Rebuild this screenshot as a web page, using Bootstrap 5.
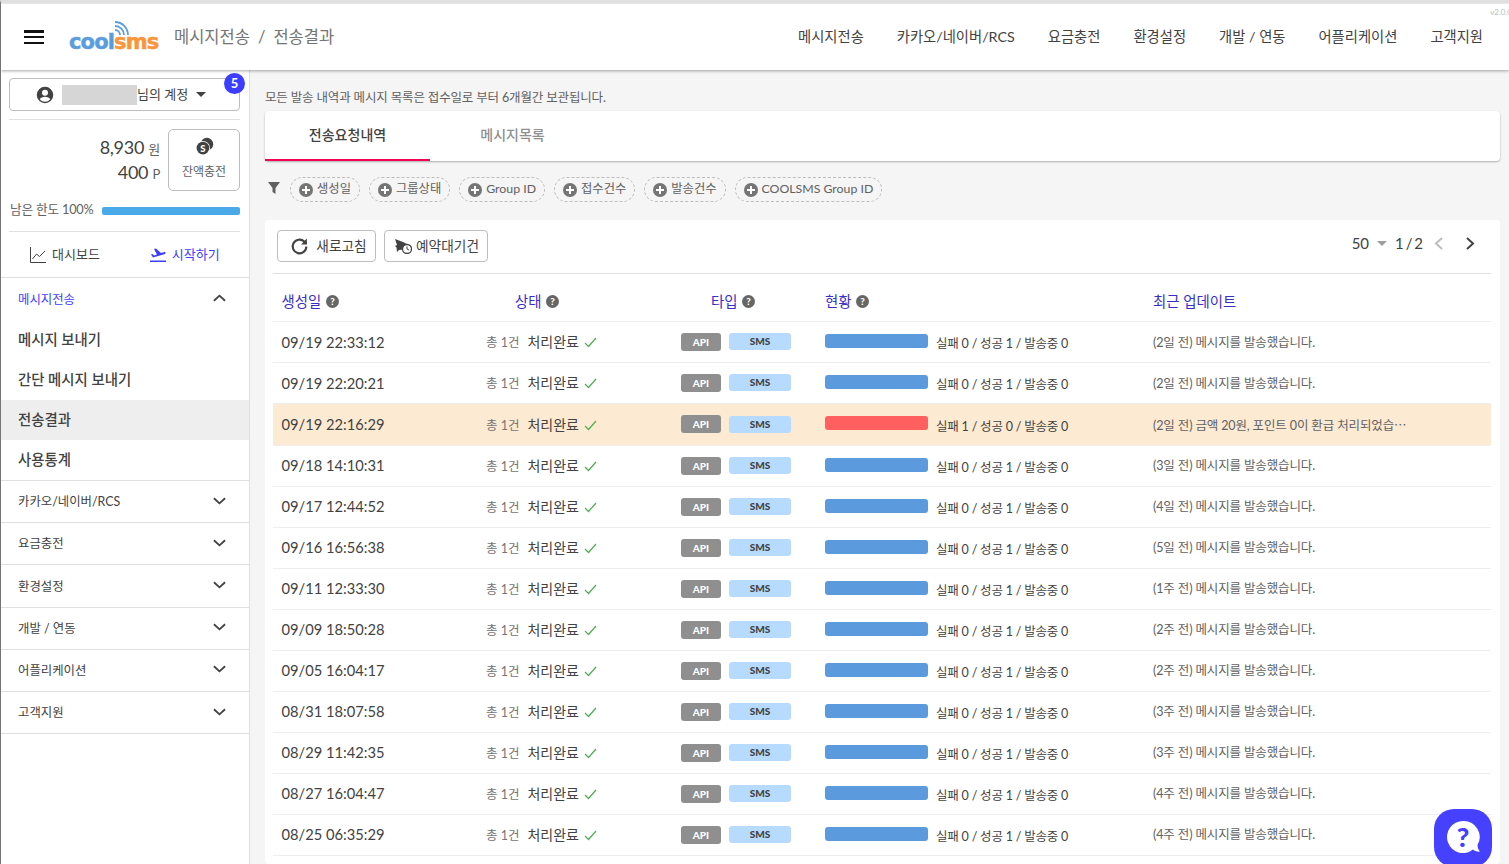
<!doctype html>
<html lang="ko">
<head>
<meta charset="utf-8">
<title>coolsms</title>
<link rel="stylesheet" href="https://cdn.jsdelivr.net/npm/bootstrap@5.3.0/dist/css/bootstrap.min.css">
<style>
html,body{height:864px;overflow:hidden}
body{font-family:Lato,"Noto Sans CJK KR",sans-serif;background:#f5f5f5;color:#424242;font-size:14px;border-left:1px solid #757575;border-top:3px solid #e0e0e0;padding-top:1px}
.app-head{height:66px;background:#fff;box-shadow:0 1px 3px rgba(0,0,0,.35);position:relative;z-index:2;padding:0 26px 0 23px}
.burger{width:20px;height:14px;display:flex;flex-direction:column;justify-content:space-between;margin-right:25px}
.burger i{display:block;height:2.5px;background:#111}
.logo-box{position:relative;width:92px;height:36px;margin-right:13px}
.logo-txt{position:absolute;left:0;bottom:2px;font:900 21px/22px "DejaVu Sans",sans-serif;letter-spacing:-.85px;color:#5b9ddc;white-space:nowrap;-webkit-text-stroke:.5px currentColor}
.logo-txt b{color:#f9953a;font-weight:900}
.logo-wave{position:absolute;left:43px;top:0}
.crumb{font-size:16.5px;color:#757575}
.crumb span{margin:0 8px}
.top-link{font-size:14.3px;color:#424242;text-decoration:none;margin-left:33px}
.ver{position:absolute;right:-3px;top:2px;font-size:8px;color:#bdbdbd}
.shell{height:794px}
.side-col{width:249px;flex:none;background:#fff;border-right:1px solid #e0e0e0;height:794px}
.side-in{padding:8px 9px 0 8px}
.acct{height:33px;border:1px solid #bdbdbd;border-radius:4px;position:relative;font-size:13px;color:#424242;background:#fff;padding-left:26px}
.mask{width:75px;height:20px;background:#d6d6d6;margin-left:8px}
.caret-d{width:0;height:0;border-left:5px solid transparent;border-right:5px solid transparent;border-top:5px solid #424242;margin-left:8px}
.num-badge{position:absolute;right:-6px;top:-6px;width:21px;height:21px;border-radius:50%;background:#3d3dff;color:#fff;font-size:13px;font-weight:700;line-height:21px;text-align:center}
.side-rule{height:1px;background:#e0e0e0;margin:0}
.bal-row{padding-top:9px}
.money{font-size:18px;line-height:25px;color:#424242;letter-spacing:-.3px;text-align:right;padding-right:8px;flex:1}
.money small{font-size:13px;color:#616161;line-height:1}
.charge{width:72px;height:62px;border:1px solid #bdbdbd;border-radius:5px;background:#fff;font-size:12px;line-height:16px;color:#616161;padding:0 0 4px}
.limit-row{height:20px;margin-top:10px;padding-left:1px}
.limit-lbl{font-size:12.7px;color:#616161;letter-spacing:-.2px;width:92px;white-space:nowrap;margin-top:-2px}
.limit-bar{flex:1;height:8px;border-radius:2px;background:#4aa9e9}
.rule-gap{margin-top:10px}
.quick{height:45px}
.quick a{font-size:13px;text-decoration:none;color:#424242;gap:6px}
.quick a.go{color:#3d3dff}
.q-one{margin-left:21px}
.q-two{margin-left:50px}
.menu-sec{border-top:1px solid #e0e0e0}
.menu-row{height:42.2px;padding:0 23px 0 17px;font-size:12.4px;color:#424242;border-bottom:1px solid #e0e0e0}
.menu-row span{padding-top:2px}
.menu-row svg{margin-bottom:2px}
.menu-row.open{border-bottom:0;color:#3d3dff;height:42px}
.menu-item{height:40px;padding-left:17px;font-size:14.4px;font-weight:500;color:#424242;text-decoration:none;display:flex;align-items:center}
.menu-item.on{background:#eee}
.menu-last{border-bottom:1px solid #e0e0e0;height:41px}
.main-col{flex:1;padding:19px 9px 0 15px;min-width:0}
.note{font-size:12.5px;line-height:18px;color:#616161;letter-spacing:-.15px;margin-bottom:4px}
.tabs-card{height:50px;background:#fff;border-radius:4px;box-shadow:0 1px 2px rgba(0,0,0,.3)}
.tab-one{width:165px;height:50px;font-size:14px;display:flex;align-items:center;justify-content:center;color:#8f8f8f;font-weight:500;padding-bottom:3px}
.tab-one.on{color:#424242;border-bottom:2px solid #f50057;padding-bottom:1px}
.filters{height:59px;padding-left:3px;padding-bottom:2px;gap:9px}
.funnel{margin-right:1px;margin-bottom:3px}
.chip{height:25px;border:1px dashed #bdbdbd;border-radius:13px;padding:0 8px;font-size:12.3px;color:#616161;display:flex;align-items:center;gap:4px;white-space:nowrap}
.list-card{background:#fff;border-radius:4px;padding:10px 9px 0 8px;height:644px;overflow:hidden}
.tools{height:44px;padding:0 4px;border-bottom:1px solid #e0e0e0}
.tool-btn{height:32px;border:1px solid #bdbdbd;border-radius:4px;background:#fff;color:#424242;font-size:13.7px;padding:0;display:flex;align-items:center;justify-content:center;gap:7px}
.btn-refresh{width:99px;padding-left:4px}
.btn-wait{width:104px;padding-left:2px;gap:4px}
.pager{font-size:15px;color:#424242;padding-right:12px;height:26px}
.caret-g{width:0;height:0;border-left:5px solid transparent;border-right:5px solid transparent;border-top:5px solid #9e9e9e}
.sent{table-layout:fixed;width:100%;margin:0;border-collapse:collapse;--bs-table-bg:transparent;color:#424242}
.sent th{height:47px;font-weight:400;font-size:14.4px;color:#3a2fc4;padding:10px 0 0 8px;vertical-align:middle;border-bottom:1px solid #eee}
.sent th:first-child,.sent td:first-child{padding-left:8.5px}
.sent td{height:41px;padding:1px 0 0 8px;vertical-align:middle;border-bottom:1px solid #eee;white-space:nowrap;color:#424242}
.sent tr.warn td{background:#fdead3;height:42px}
.sent tr.warn ~ tr td.c-date,.sent tr.warn ~ tr td.c-state{padding-top:0}
.c-date{font-size:14.7px}
.c-total{font-size:12.5px;color:#757575;margin-right:8px}
.c-done{font-size:14px;color:#424242}
.c-check{margin-left:5px;vertical-align:-1px}
.lbl-api{display:inline-block;width:40px;height:18px;line-height:18px;background:#8f8f8f;color:#fff;border-radius:3px;text-align:center;font-size:10px;font-weight:900;vertical-align:middle;margin-top:-4px}
.lbl-sms{display:inline-block;width:62px;height:17px;line-height:17px;background:#b6dbff;color:#424242;border-radius:3px;text-align:center;font-size:10px;font-weight:900;margin-left:8px;vertical-align:middle;margin-top:-4px}
.p-bar{display:inline-block;width:103px;height:14px;border-radius:3px;background:#5c9ade;vertical-align:middle;margin-top:-4px}
.p-bar.bad{background:#ff5f5f}
.p-txt{font-size:12.5px;color:#424242;margin-left:8px;letter-spacing:-.2px;vertical-align:-2px}
.sent td.upd{font-size:12.5px;color:#616161;letter-spacing:-.13px;padding-top:3px}
.sent tr.warn ~ tr td.upd{padding-top:1px}
.upd-dots{font-family:"Noto Sans CJK KR",sans-serif}
.fab-clip{position:fixed;inset:0;overflow:hidden;pointer-events:none;z-index:5}
.help-fab{position:absolute;left:1434px;top:809px;width:58px;height:58px;border-radius:20px;background:#4640ff;display:flex;align-items:center;justify-content:center}
.qmark{width:13px;height:13px;vertical-align:-1px;margin-left:5px}
</style>
</head>
<body>
<header class="app-head d-flex align-items-center">
  <div class="burger"><i></i><i></i><i></i></div>
  <div class="logo-box">
    <svg class="logo-wave" width="20" height="20" viewBox="0 0 20 20" fill="none" stroke="#5b9ddc" stroke-width="1.8"><path d="M3 11a5 5 0 0 1 5 5"/><path d="M3 7a9 9 0 0 1 9 9"/><path d="M3 3a13 13 0 0 1 13 13"/></svg>
    <div class="logo-txt">cool<b>sms</b></div>
  </div>
  <div class="crumb">메시지전송<span>/</span>전송결과</div>
  <nav class="top-nav ms-auto d-flex">
    <a class="top-link" href="#">메시지전송</a><a class="top-link" href="#">카카오/네이버/RCS</a><a class="top-link" href="#">요금충전</a><a class="top-link" href="#">환경설정</a><a class="top-link" href="#">개발 / 연동</a><a class="top-link" href="#">어플리케이션</a><a class="top-link" href="#">고객지원</a>
  </nav>
  <div class="ver">v2.0.0</div>
</header>
<div class="shell d-flex">
  <aside class="side-col">
    <div class="side-in">
      <div class="acct d-flex align-items-center">
        <svg width="18" height="18" viewBox="0 0 24 24" fill="#424242"><path d="M12 1a11 11 0 1 0 0 22 11 11 0 0 0 0-22zm0 4a4 4 0 1 1 0 8 4 4 0 0 1 0-8zm0 16a8.800 8.800 0 0 1-7-3.500c.5-2 4.500-3.200 7-3.200s6.500 1.200 7 3.200a8.800 8.800 0 0 1-7 3.500z"/></svg>
        <span class="mask"></span><span>님의 계정</span><span class="caret-d"></span>
        <span class="num-badge">5</span>
      </div>
      <div class="side-rule mt-2"></div>
      <div class="bal-row d-flex align-items-center">
        <div class="money">8,930 <small>원</small><br>400 <small>P</small></div>
        <button class="charge d-flex flex-column align-items-center justify-content-center" type="button">
          <svg width="19" height="19" viewBox="0 0 24 24" class="mb-2"><circle cx="15" cy="9" r="8" fill="#424242"/><circle cx="10" cy="14" r="9" fill="#fff"/><circle cx="10" cy="14" r="8" fill="#424242"/><text x="10" y="18.500" text-anchor="middle" font-size="12" font-weight="900" fill="#fff" font-family="Lato">S</text></svg>
          잔액충전
        </button>
      </div>
      <div class="limit-row d-flex align-items-center"><span class="limit-lbl">남은 한도 100%</span><span class="limit-bar"></span></div>
      <div class="side-rule rule-gap"></div>
      <div class="quick d-flex align-items-center">
        <a href="#" class="q-one d-flex align-items-center">
          <svg width="16" height="16" viewBox="0 0 16 16" fill="none" stroke="#424242" stroke-width="1"><path d="M.5 0v15.500H16"/><path d="M2.500 12l4-5 3 2.500L15 4"/></svg>대시보드</a>
        <a href="#" class="go q-two d-flex align-items-center">
          <svg width="16" height="15" viewBox="0 0 16 15" fill="#3d3dff"><path d="M0 13.500h16V15H0z"/><path d="M1 7.500l1.500-.5 1.500 1.500 3-1L4 2l2-.5 5 4.500 3.500-1c1-.3 1.500 1.500.5 2L3 10.500z"/></svg>시작하기</a>
      </div>
    </div>
    <div class="menu-sec">
      <div class="menu-row open d-flex align-items-center justify-content-between"><span>메시지전송</span><svg width="13" height="8" viewBox="0 0 14 8" fill="none" stroke="#424242" stroke-width="2"><path d="M1 7l6-5.500L13 7"/></svg></div>
      <a class="menu-item" href="#">메시지 보내기</a>
      <a class="menu-item" href="#">간단 메시지 보내기</a>
      <a class="menu-item on" href="#">전송결과</a>
      <a class="menu-item menu-last" href="#">사용통계</a>
      <div class="menu-row d-flex align-items-center justify-content-between"><span>카카오/네이버/RCS</span><svg width="13" height="8" viewBox="0 0 14 8" fill="none" stroke="#424242" stroke-width="2"><path d="M1 1l6 5.500L13 1"/></svg></div>
      <div class="menu-row d-flex align-items-center justify-content-between"><span>요금충전</span><svg width="13" height="8" viewBox="0 0 14 8" fill="none" stroke="#424242" stroke-width="2"><path d="M1 1l6 5.500L13 1"/></svg></div>
      <div class="menu-row d-flex align-items-center justify-content-between"><span>환경설정</span><svg width="13" height="8" viewBox="0 0 14 8" fill="none" stroke="#424242" stroke-width="2"><path d="M1 1l6 5.500L13 1"/></svg></div>
      <div class="menu-row d-flex align-items-center justify-content-between"><span>개발 / 연동</span><svg width="13" height="8" viewBox="0 0 14 8" fill="none" stroke="#424242" stroke-width="2"><path d="M1 1l6 5.500L13 1"/></svg></div>
      <div class="menu-row d-flex align-items-center justify-content-between"><span>어플리케이션</span><svg width="13" height="8" viewBox="0 0 14 8" fill="none" stroke="#424242" stroke-width="2"><path d="M1 1l6 5.500L13 1"/></svg></div>
      <div class="menu-row d-flex align-items-center justify-content-between"><span>고객지원</span><svg width="13" height="8" viewBox="0 0 14 8" fill="none" stroke="#424242" stroke-width="2"><path d="M1 1l6 5.500L13 1"/></svg></div>
    </div>
  </aside>
  <main class="main-col">
    <div class="note">모든 발송 내역과 메시지 목록은 접수일로 부터 6개월간 보관됩니다.</div>
    <div class="tabs-card d-flex"><div class="tab-one on">전송요청내역</div><div class="tab-one">메시지목록</div></div>
    <div class="filters d-flex align-items-center" id="filters">
      <svg class="funnel" width="12" height="12" viewBox="0 0 12 12" fill="#616161"><path d="M0 0h12L7.500 6v6l-3-2V6z"/></svg>
    </div>
    <section class="list-card">
      <div class="tools d-flex align-items-start">
        <button class="tool-btn btn-refresh" type="button">
          <svg width="19" height="19" viewBox="0 0 18 18" fill="none" stroke="#424242" stroke-width="2"><path d="M15.500 9a6.500 6.500 0 1 1-2-4.700L15.500 6"/><path d="M16 1.500V7h-5.500z" fill="#424242" stroke="none"/></svg>새로고침</button>
        <button class="tool-btn btn-wait ms-2" type="button">
          <svg width="17" height="16" viewBox="0 0 17 16" fill="#424242"><path d="M0 1l8 3 4 2-3 1.500-.5 4L4 12l-2 2-.5-4.500L0 8l2-1z"/><circle cx="12" cy="11" r="4.500" fill="#fff" stroke="#424242" stroke-width="1.300"/><path d="M12 8.500V11l2 1" fill="none" stroke="#424242"/></svg>예약대기건</button>
        <div class="pager ms-auto d-flex align-items-center">50<span class="caret-g mx-2"></span>1&thinsp;/&thinsp;2
          <svg width="9" height="13" viewBox="0 0 9 13" fill="none" stroke="#bdbdbd" stroke-width="2" style="margin-left:11px"><path d="M8 1L2 6.500 8 12"/></svg>
          <svg width="9" height="13" viewBox="0 0 9 13" fill="none" stroke="#424242" stroke-width="2" style="margin-left:23px"><path d="M1 1l6 5.500L1 12"/></svg>
        </div>
      </div>
      <table class="table sent">
        <colgroup><col style="width:205px"><col style="width:195px"><col style="width:144px"><col style="width:328px"><col></colgroup>
        <thead><tr id="hd"></tr></thead>
        <tbody id="bd"></tbody>
      </table>
    </section>
  </main>
</div>
<div class="fab-clip"><div class="help-fab">
  <svg width="44" height="44" viewBox="0 0 44 44"><path d="M22 5a16 16 0 1 0 10 28.500c2 1.800 4.500 2.500 7 2-1.500-1.500-2.500-4-2.500-6.500A16 16 0 0 0 22 5z" fill="#fff"/><text x="22" y="31" text-anchor="middle" font-family="Lato" font-weight="900" font-size="27" fill="#4640ff">?</text></svg>
</div></div>
<script>
const q='<svg class="qmark" viewBox="0 0 16 16"><circle cx="8" cy="8" r="8" fill="#666"/><text x="8" y="12.500" text-anchor="middle" font-size="12" font-weight="900" font-family="Lato" fill="#fff">?</text></svg>';
const plus='<svg width="14" height="14" viewBox="0 0 14 14"><circle cx="7" cy="7" r="7" fill="#757575"/><path d="M3 7h8M7 3v8" stroke="#fff" stroke-width="2"/></svg>';
document.getElementById('filters').insertAdjacentHTML('beforeend',['생성일','그룹상태','Group ID','접수건수','발송건수','COOLSMS Group ID'].map(t=>'<div class="chip">'+plus+t+'</div>').join(''));
document.getElementById('hd').innerHTML=
 '<th>생성일'+q+'</th><th style="padding-left:37px">상태'+q+'</th><th style="padding-left:38px">타입'+q+'</th><th>현황'+q+'</th><th>최근 업데이트</th>';
const rows=[['09/19 22:33:12','2일'],['09/19 22:20:21','2일'],['09/19 22:16:29','2일',1],['09/18 14:10:31','3일'],['09/17 12:44:52','4일'],['09/16 16:56:38','5일'],['09/11 12:33:30','1주'],['09/09 18:50:28','2주'],['09/05 16:04:17','2주'],['08/31 18:07:58','3주'],['08/29 11:42:35','3주'],['08/27 16:04:47','4주'],['08/25 06:35:29','4주']];
const chk='<svg class="c-check" width="13" height="11" viewBox="0 0 13 11" fill="none" stroke="#4caf50" stroke-width="1.200"><path d="M1 6l3.500 3.500L12 1"/></svg>';
document.getElementById('bd').innerHTML=rows.map(r=>'<tr'+(r[2]?' class="warn"':'')+'><td class="c-date">'+r[0]+'</td><td class="c-state"><span class="c-total">총 1건</span><span class="c-done">처리완료</span>'+chk+'</td><td><span class="lbl-api">API</span><span class="lbl-sms">SMS</span></td><td><span class="p-bar'+(r[2]?' bad':'')+'"></span><span class="p-txt">실패 '+(r[2]?1:0)+' / 성공 '+(r[2]?0:1)+' / 발송중 0</span></td><td class="upd">('+r[1]+' 전) '+(r[2]?'금액 20원, 포인트 0이 환급 처리되었습<span class="upd-dots">⋯</span>':'메시지를 발송했습니다.')+'</td></tr>').join('');
</script>
<script src="https://cdn.jsdelivr.net/npm/bootstrap@5.3.0/dist/js/bootstrap.bundle.min.js"></script>
</body>
</html>
